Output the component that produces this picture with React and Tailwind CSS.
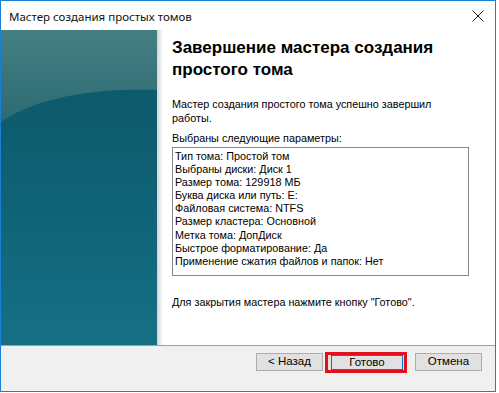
import React from 'react';

const params = [
  'Тип тома: Простой том',
  'Выбраны диски: Диск 1',
  'Размер тома: 129918 МБ',
  'Буква диска или путь: E:',
  'Файловая система: NTFS',
  'Размер кластера: Основной',
  'Метка тома: ДопДиск',
  'Быстрое форматирование: Да',
  'Применение сжатия файлов и папок: Нет',
];

const SidePanel = () => (
  <div className="w-[156px] h-full shrink-0">
    <svg width="156" height="315" viewBox="0 0 156 315" className="block">
      <defs>
        <linearGradient id="low" x1="0" y1="0" x2="0" y2="1">
          <stop offset="0" stopColor="#0b5665" />
          <stop offset="0.5" stopColor="#0f6175" />
          <stop offset="1" stopColor="#167084" />
        </linearGradient>
        <linearGradient id="top" x1="0" y1="0" x2="0" y2="1">
          <stop offset="0" stopColor="#457f84" />
          <stop offset="1" stopColor="#2c6b72" />
        </linearGradient>
      </defs>
      <rect width="156" height="315" fill="url(#low)" />
      <path d="M0 0 H156 V60 C105 58 40 64 0 92 Z" fill="url(#top)" />
    </svg>
  </div>
);

const Button = ({ children, className = '' }) => (
  <button
    className={`w-[67px] h-[18px] shrink-0 border border-[#adadad] bg-[#e1e1e1] text-[11.5px] leading-none text-black ${className}`}
  >
    {children}
  </button>
);

export default function App() {
  return (
    <div className="w-[499px] h-[393px] bg-white" style={{ fontFamily: '"Liberation Sans", Arial, sans-serif' }}>
      <div className="w-[496px] h-[392px] border border-[#1a80d6] flex flex-col bg-white">
        {/* title bar */}
        <div className="h-[29px] shrink-0 flex items-center justify-between pl-[8px] pr-[6px]">
          <span className="text-[11.5px] text-[#111] pt-[2px]" style={{ fontFamily: '"Noto Sans", "Open Sans", sans-serif' }}>
            Мастер создания простых томов
          </span>
          <svg width="12" height="12" viewBox="0 0 12 12" className="mr-[5px] mt-[1px]">
            <path d="M0.5 0.5 L11.5 11.5 M11.5 0.5 L0.5 11.5" stroke="#1a1a1a" strokeWidth="1" />
          </svg>
        </div>

        {/* body */}
        <div className="h-[315px] shrink-0 flex">
          <SidePanel />
          <div className="w-[6px] bg-gradient-to-r from-[#d4d4d4] to-white shrink-0" />
          <div className="flex-1 pl-[9px] pt-[7px] text-black">
            <h1 className="text-[17px] font-bold leading-[22px]">
              Завершение мастера создания
              <br />
              простого тома
            </h1>
            <p className="text-[10.8px] leading-[14px] mt-[16px] w-[280px]">
              Мастер создания простого тома успешно завершил работы.
            </p>
            <p className="text-[10.8px] leading-[14px] mt-[6px]">Выбраны следующие параметры:</p>
            <div className="mt-[2px] w-[297px] h-[129px] border border-[#828790] pl-[2px] pt-[2px]">
              {params.map((line) => (
                <div key={line} className="text-[10.8px] leading-[13.1px]">
                  {line}
                </div>
              ))}
            </div>
            <p className="text-[10.8px] leading-[14px] mt-[19px]">
              Для закрытия мастера нажмите кнопку "Готово".
            </p>
          </div>
        </div>

        {/* footer */}
        <div className="flex-1 border-t border-[#a0a0a0] bg-[#f0f0f0] flex items-start justify-end pt-[7px] pr-[13px]">
          <Button>&lt; Назад</Button>
          <div className="ml-[2px] -mt-[1px] w-[82px] h-[21px] shrink-0 border-[3px] border-[#e3101c] flex">
            <div className="flex-1 bg-[#e1e1e1] pl-[3px] pr-[1px]">
              <div className="h-full border border-[#0078d7] flex items-center justify-center text-[11.5px] leading-none">
                Готово
              </div>
            </div>
          </div>
          <Button className="ml-[8px]">Отмена</Button>
        </div>
      </div>
    </div>
  );
}
